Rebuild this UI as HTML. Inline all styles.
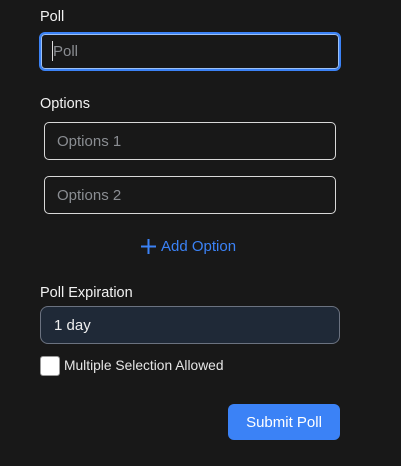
<!DOCTYPE html>
<html><head><style>
body{margin:0;width:401px;height:466px;background:#181818;font-family:"Liberation Sans",sans-serif;color:#f0f0f0;position:relative;overflow:hidden}
.a{position:absolute;box-sizing:border-box}
.lbl{font-size:14.5px;color:#f2f2f2}
.ph{color:#8a8d92;font-size:15px}
</style></head><body>
<div class="a lbl" style="left:40px;top:9px">Poll</div>
<div class="a" style="left:39px;top:32px;width:302px;height:39px;border:2px solid #3b82f6;border-radius:6px;box-shadow:0 0 0 1px #9cc0f5 inset"></div>
<div class="a ph" style="left:53px;top:43px">Poll</div>
<div class="a" style="left:52px;top:41px;width:1px;height:20px;background:#ddd"></div>
<div class="a lbl" style="left:40px;top:96px">Options</div>
<div class="a" style="left:44px;top:122px;width:292px;height:38px;border:1px solid #d8d8d8;border-radius:5px"></div>
<div class="a ph" style="left:57px;top:133px">Options 1</div>
<div class="a" style="left:44px;top:176px;width:292px;height:38px;border:1px solid #d8d8d8;border-radius:5px"></div>
<div class="a ph" style="left:57px;top:187px">Options 2</div>
<svg class="a" style="left:140px;top:238px" width="17" height="17"><path d="M8.5 1V16M1 8.5H16" stroke="#3b82f6" stroke-width="2"/></svg>
<div class="a" style="left:161px;top:238px;font-size:15px;color:#3b82f6">Add Option</div>
<div class="a lbl" style="left:40px;top:285px">Poll Expiration</div>
<div class="a" style="left:40px;top:306px;width:300px;height:38px;background:#1f2937;border:1px solid #6b7280;border-radius:8px"></div>
<div class="a" style="left:54px;top:317px;font-size:15px;color:#eee">1 day</div>
<div class="a" style="left:40px;top:356px;width:20px;height:20px;background:#fff;border-radius:3px;border:1px solid #999"></div>
<div class="a" style="left:64px;top:358px;font-size:13.8px;color:#e6e6e6">Multiple Selection Allowed</div>
<div class="a" style="left:228px;top:404px;width:112px;height:36px;background:#3b82f6;border-radius:6px;color:#fff;font-size:15px;text-align:center;line-height:38px">Submit Poll</div>
</body></html>
